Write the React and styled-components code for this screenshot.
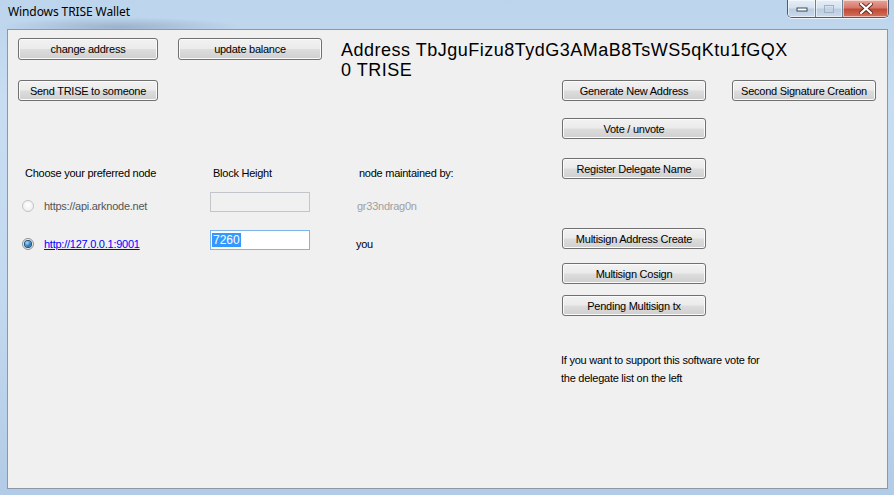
import React from "react";
import styled, { createGlobalStyle } from "styled-components";

const Global = createGlobalStyle`
  html, body { margin: 0; padding: 0; width: 894px; height: 495px; overflow: hidden; }
  body { font-family: "Liberation Sans", Arial, sans-serif; }
  * { box-sizing: border-box; }
`;

const Frame = styled.div`
  width: 894px;
  height: 495px;
  display: flex;
  flex-direction: column;
  background:
    radial-gradient(ellipse 120px 10px at 120px 27px, rgba(90,110,140,0.35), transparent),
    linear-gradient(180deg, #bcd4ec 0%, #c8ddf2 20%, #c3d9ef 60%, #b2cbe6 100%);
`;

const TitleBar = styled.div`
  height: 29px;
  display: flex;
  align-items: flex-start;
`;

const Title = styled.div`
  font-family: "Noto Sans", "Open Sans", sans-serif;
  font-size: 12px;
  line-height: 16px;
  color: #000;
  padding: 4px 0 0 8px;
  letter-spacing: -0.1px;
`;

const CaptionGroup = styled.div`
  margin-left: auto;
  margin-right: 5px;
  display: flex;
  height: 18px;
  border: 1px solid #4c5d72;
  border-top: none;
  border-radius: 0 0 5px 5px;
  overflow: hidden;
  box-shadow: 0 1px 0 rgba(255,255,255,0.7);
`;

const CaptionBtn = styled.div`
  width: ${p => p.$w}px;
  height: 100%;
  display: flex;
  align-items: center;
  justify-content: center;
  border-left: ${p => (p.$first ? "none" : "1px solid #6e7f94")};
  background: ${p =>
    p.$close
      ? "linear-gradient(180deg, #e8a59a 0%, #d7796a 45%, #c04a36 55%, #d2735c 100%)"
      : "linear-gradient(180deg, #e6eef7 0%, #d6e2ef 45%, #bccde1 55%, #cbdaec 100%)"};
  box-shadow: inset 0 0 0 1px rgba(255,255,255,0.55);
`;

const Client = styled.div`
  flex: 1;
  margin: 0 6px 6px 7px;
  border: 1px solid #8b98a8;
  background: #f0f0f0;
  padding: 8px 0 0 10px;
  display: flex;
  flex-direction: column;
  font-size: 11px;
  letter-spacing: -0.25px;
  color: #000;
`;

const TopRow = styled.div`
  display: flex;
  align-items: flex-start;
`;

const Button = styled.div`
  width: ${p => p.$w || 144}px;
  height: ${p => p.$h || 21}px;
  margin-top: ${p => p.$mt || 0}px;
  margin-left: ${p => p.$ml || 0}px;
  flex: none;
  display: flex;
  align-items: center;
  justify-content: center;
  border: 1px solid #707070;
  border-radius: 3px;
  background: linear-gradient(180deg, #f2f2f2 0%, #ebebeb 48%, #dddddd 52%, #cfcfcf 100%);
  box-shadow: inset 0 0 0 1px #fbfbfb;
  font-size: 11px;
  color: #000;
  white-space: nowrap;
`;

const AddressInfo = styled.div`
  margin-left: 19px;
  margin-top: 2px;
  font-size: 18px;
  line-height: 20px;
  letter-spacing: 0.5px;
  color: #000;
`;

const Main = styled.div`
  display: flex;
  align-items: flex-start;
`;

const LeftPane = styled.div`
  width: 544px;
  flex: none;
  display: flex;
  flex-direction: column;
  align-items: flex-start;
`;

const NodeGrid = styled.div`
  margin-top: 65px;
  display: grid;
  grid-template-columns: 192px 146px 1fr;
  grid-template-rows: 26px 38px 21px;
`;

const HeaderCell = styled.div`
  line-height: 13px;
  padding-top: 1px;
  padding-left: ${p => p.$pl}px;
  white-space: nowrap;
`;

const Cell = styled.div`
  display: flex;
  align-items: center;
  height: 14px;
  margin-top: 7px;
  padding-left: ${p => p.$pl || 0}px;
  color: ${p => p.$color || "#000"};
  white-space: nowrap;
`;

const Radio = styled.span`
  width: 12px;
  height: 12px;
  border-radius: 50%;
  flex: none;
  margin-right: 10px;
  display: inline-flex;
  align-items: center;
  justify-content: center;
  border: 1px solid ${p => (p.$checked ? "#8b8f94" : "#c4c4c4")};
  background: ${p =>
    p.$checked
      ? "radial-gradient(circle at 50% 40%, #ffffff 0%, #e8e8e8 70%, #d6d6d6 100%)"
      : "radial-gradient(circle at 50% 40%, #ffffff 0%, #f0f0f0 70%, #e2e2e2 100%)"};
`;

const RadioDot = styled.span`
  width: 6px;
  height: 6px;
  border-radius: 50%;
  background: radial-gradient(circle at 35% 30%, #a6dcff 0%, #2e7fc4 55%, #14426e 100%);
  box-shadow: 0 0 0 1px #1c4d78;
`;

const NodeLink = styled.span`
  color: #0000ff;
  text-decoration: underline;
`;

const TextBox = styled.div`
  width: 100px;
  height: 20px;
  border: 1px solid ${p => (p.$active ? "#7eb4ea" : "#c2c6ca")};
  background: ${p => (p.$active ? "#ffffff" : "#f0f0f0")};
  padding: 2px 0 0 1px;
  display: flex;
  align-items: flex-start;
`;

const Selected = styled.span`
  background: #3399ff;
  color: #fff;
  font-size: 12px;
  line-height: 14px;
  padding: 0 1px;
  letter-spacing: 0;
`;

const RightPane = styled.div`
  display: flex;
  align-items: flex-start;
`;

const ButtonColumn = styled.div`
  width: 144px;
  display: flex;
  flex-direction: column;
  flex: none;
`;

const Note = styled.div`
  margin-top: 35px;
  margin-left: -1px;
  line-height: 18px;
  white-space: nowrap;
`;

const MinIcon = () => (
  <svg width="12" height="6" viewBox="0 0 12 6">
    <rect x="1" y="2" width="10" height="3" fill="#fff" stroke="#3b4a5e" strokeWidth="1" />
  </svg>
);
const MaxIcon = () => (
  <svg width="12" height="10" viewBox="0 0 12 10">
    <rect x="1.5" y="1.5" width="9" height="7" fill="none" stroke="#9fb1c6" strokeWidth="1" />
    <rect x="3.5" y="3.5" width="5" height="3" fill="none" stroke="#c8d4e2" strokeWidth="1" />
  </svg>
);
const CloseIcon = () => (
  <svg width="14" height="11" viewBox="0 0 14 11">
    <path d="M2 1 L12 10 M12 1 L2 10" stroke="#5a2a22" strokeWidth="4" strokeLinecap="square" />
    <path d="M2 1 L12 10 M12 1 L2 10" stroke="#ffffff" strokeWidth="2.2" strokeLinecap="square" />
  </svg>
);

export default function App() {
  return (
    <>
      <Global />
      <Frame>
        <TitleBar>
          <Title>Windows TRISE Wallet</Title>
          <CaptionGroup>
            <CaptionBtn $w={27} $first><MinIcon /></CaptionBtn>
            <CaptionBtn $w={27}><MaxIcon /></CaptionBtn>
            <CaptionBtn $w={46} $close><CloseIcon /></CaptionBtn>
          </CaptionGroup>
        </TitleBar>
        <Client>
          <TopRow>
            <Button $w={140} $h={22}>change address</Button>
            <Button $w={144} $h={22} $ml={20}>update balance</Button>
            <AddressInfo>
              <div>Address TbJguFizu8TydG3AMaB8TsWS5qKtu1fGQX</div>
              <div>0 TRISE</div>
            </AddressInfo>
          </TopRow>
          <Main>
            <LeftPane>
              <Button $w={140}>Send TRISE to someone</Button>
              <NodeGrid>
                <HeaderCell $pl={7}>Choose your preferred node</HeaderCell>
                <HeaderCell $pl={3}>Block Height</HeaderCell>
                <HeaderCell $pl={3}>node maintained by:</HeaderCell>

                <Cell $pl={4} $color="#555">
                  <Radio />https://api.arknode.net
                </Cell>
                <TextBox />
                <Cell $pl={1} $color="#a0a0a0">gr33ndrag0n</Cell>

                <Cell $pl={4}>
                  <Radio $checked><RadioDot /></Radio>
                  <NodeLink>http://127.0.0.1:9001</NodeLink>
                </Cell>
                <TextBox $active><Selected>7260</Selected></TextBox>
                <Cell>you</Cell>
              </NodeGrid>
            </LeftPane>
            <RightPane>
              <ButtonColumn>
                <Button>Generate New Address</Button>
                <Button $mt={17}>Vote / unvote</Button>
                <Button $mt={19}>Register Delegate Name</Button>
                <Button $mt={49}>Multisign Address Create</Button>
                <Button $mt={14}>Multisign Cosign</Button>
                <Button $mt={11}>Pending Multisign tx</Button>
                <Note>
                  If you want to support this software vote for
                  <br />
                  the delegate list on the left
                </Note>
              </ButtonColumn>
              <Button $ml={26}>Second Signature Creation</Button>
            </RightPane>
          </Main>
        </Client>
      </Frame>
    </>
  );
}
